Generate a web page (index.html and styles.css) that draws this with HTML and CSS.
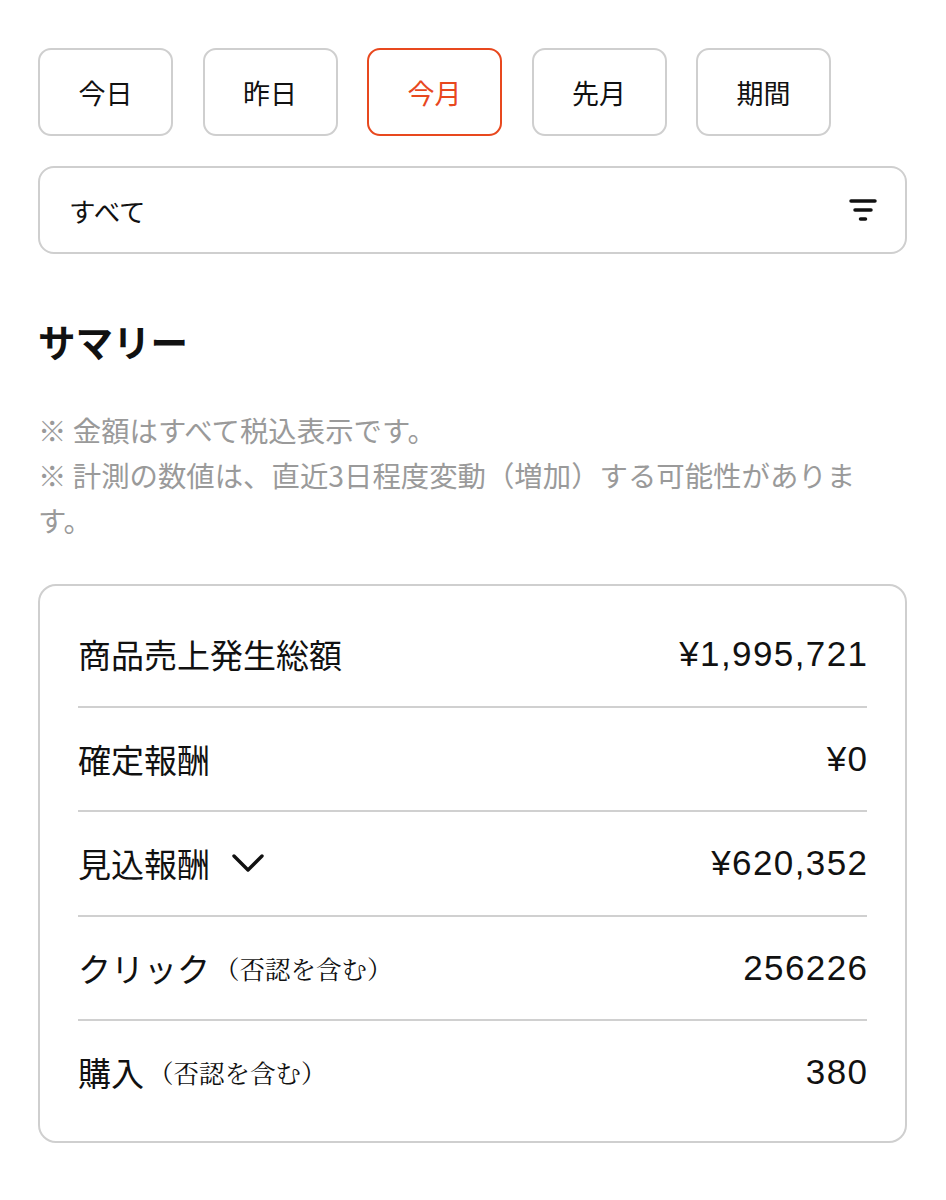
FILE: index.html
```html
<!DOCTYPE html>
<html lang="ja">
<head>
<meta charset="utf-8">
<link rel="stylesheet" href="styles.css">
</head>
<body>
<div class="page">
  <div class="periods">
    <button class="period">今日</button>
    <button class="period">昨日</button>
    <button class="period active">今月</button>
    <button class="period">先月</button>
    <button class="period">期間</button>
  </div>
  <div class="select">
    <span class="select-label">すべて</span>
    <svg class="filter-icon" width="28" height="28" viewBox="0 0 28 28">
      <line x1="2" y1="5" x2="26" y2="5" />
      <line x1="6" y1="14" x2="22" y2="14" />
      <line x1="11.5" y1="23" x2="16.5" y2="23" />
    </svg>
  </div>
  <h2 class="title">サマリー</h2>
  <p class="notes">※ 金額はすべて税込表示です。<br>※ 計測の数値は、直近3日程度変動（増加）する可能性があります。</p>
  <div class="card">
    <div class="row">
      <span class="label">商品売上発生総額</span>
      <span class="value">¥1,995,721</span>
    </div>
    <div class="row">
      <span class="label">確定報酬</span>
      <span class="value">¥0</span>
    </div>
    <div class="row">
      <span class="label">見込報酬
        <svg class="chevron" width="32" height="22" viewBox="0 0 32 22">
          <polyline points="2,4 16,18 30,4" />
        </svg>
      </span>
      <span class="value">¥620,352</span>
    </div>
    <div class="row">
      <span class="label">クリック<span class="sub">（否認を含む）</span></span>
      <span class="value">256226</span>
    </div>
    <div class="row">
      <span class="label">購入<span class="sub">（否認を含む）</span></span>
      <span class="value">380</span>
    </div>
  </div>
</div>
</body>
</html>
```

FILE: styles.css
```css
html, body {
  margin: 0;
  padding: 0;
  background: #fff;
}
body {
  font-family: "Noto Sans CJK JP", "Noto Sans", sans-serif;
  color: #111;
}
.page {
  padding: 48px 39px 40px 38px;
}
.periods {
  display: flex;
  gap: 29.5px;
}
.period {
  width: 135px;
  height: 88px;
  box-sizing: border-box;
  border: 2px solid #cfcfcf;
  border-radius: 13px;
  background: #fff;
  font-family: inherit;
  font-size: 27px;
  color: #111;
  padding: 0;
  line-height: 1;
}
.period.active {
  border-color: #e8481e;
  color: #e8481e;
}
.select {
  margin-top: 30px;
  height: 88px;
  box-sizing: border-box;
  border: 2px solid #cfcfcf;
  border-radius: 16px;
  display: flex;
  align-items: center;
  justify-content: space-between;
  padding: 0 28px 0 29px;
}
.select-label {
  font-size: 26.5px;
}
.filter-icon line {
  stroke: #111;
  stroke-width: 3.5;
  stroke-linecap: round;
}
.title {
  margin: 62px 0 0;
  font-size: 37.5px;
  font-weight: 700;
  line-height: 50px;
}
.notes {
  margin: 41px 0 0;
  font-size: 28.4px;
  line-height: 45px;
  color: #9a9a9a;
  line-break: strict;
}
.card {
  margin-top: 42px;
  border: 2px solid #cfcfcf;
  border-radius: 18px;
  padding: 17px 38px 17.5px;
}
.row {
  height: 102.5px;
  display: flex;
  align-items: center;
  justify-content: space-between;
  border-bottom: 2px solid #d0d0d0;
}
.row:last-child {
  border-bottom: none;
}
.label {
  font-size: 33px;
  display: flex;
  align-items: center;
}
.sub {
  font-family: "Noto Serif CJK JP", "Noto Serif JP", serif;
  font-size: 25.5px;
  margin-left: 4px;
}
.chevron {
  margin-left: 22px;
}
.chevron polyline {
  fill: none;
  stroke: #111;
  stroke-width: 3.4;
  stroke-linecap: round;
  stroke-linejoin: round;
}
.value {
  font-family: "Liberation Sans", Arial, sans-serif;
  font-size: 35px;
  letter-spacing: 1.4px;
  margin-right: -1.4px;
}
```
